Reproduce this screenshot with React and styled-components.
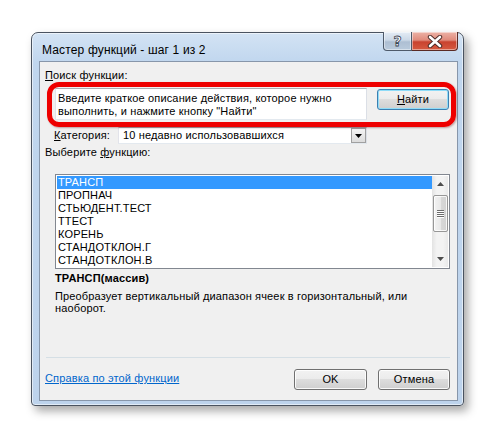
import React from "react";
import styled, { createGlobalStyle } from "styled-components";

const Global = createGlobalStyle`
  html, body { margin: 0; padding: 0; background: #ffffff; }
  body { font-family: "Liberation Sans", Arial, sans-serif; }
`;

const Page = styled.div`
  width: 497px;
  height: 439px;
  padding: 32px 0 0 31px;
  box-sizing: border-box;
  position: relative;
  overflow: hidden;
`;

const Window = styled.div`
  width: 433px;
  height: 374px;
  box-sizing: border-box;
  border: 1px solid #4a5360;
  border-radius: 7px 7px 4px 4px;
  background: linear-gradient(to bottom, #d3e3f4 0px, #c0d6ee 30px, #bdd3ec 100%);
  box-shadow: 4px 5px 10px rgba(0, 0, 0, 0.35), inset 0 0 0 1px rgba(255, 255, 255, 0.55);
  padding: 0 5px 4px 7px;
  display: flex;
  flex-direction: column;
`;

const TitleBar = styled.div`
  height: 28px;
  display: flex;
  justify-content: space-between;
  align-items: flex-start;
`;

const Title = styled.div`
  font-family: "Liberation Sans", Arial, sans-serif;
  font-size: 12px;
  line-height: 15px;
  color: #000;
  margin: 10px 0 0 3px;
  letter-spacing: 0.15px;
`;

const CaptionButtons = styled.div`
  display: flex;
  margin-top: -1px;
`;

const CapButton = styled.div`
  width: ${(p) => p.$w}px;
  height: 19px;
  box-sizing: border-box;
  border: 1px solid ${(p) => (p.$close ? "#5a2a24" : "#4e5a6a")};
  border-top: none;
  border-radius: ${(p) => (p.$close ? "0 0 4px 0" : "0 0 0 4px")};
  ${(p) => (p.$close ? "border-left: none;" : "")}
  background: ${(p) =>
    p.$close
      ? "linear-gradient(to bottom, #ecb2a6 0%, #e08b7c 45%, #c9432f 55%, #d65a40 100%)"
      : "linear-gradient(to bottom, #e4ecf5 0%, #cbd8e7 45%, #aebfd3 55%, #b9cadc 100%)"};
  box-shadow: inset 0 0 0 1px rgba(255, 255, 255, 0.45);
  display: flex;
  align-items: center;
  justify-content: center;
`;

const QMark = styled.span`
  font-family: "DejaVu Sans", sans-serif;
  font-weight: bold;
  font-size: 14px;
  line-height: 14px;
  color: #fff;
  -webkit-text-stroke: 0.8px #3a4452;
  margin-top: -1px;
`;

const Client = styled.div`
  flex: 1;
  background: #f0f0f0;
  border: 1px solid #8796aa;
  display: flex;
  flex-direction: column;
  padding: 0 7px 0 5px;
  font-family: "Liberation Sans", Arial, sans-serif;
  font-size: 11px;
  letter-spacing: 0.15px;
  color: #000;
`;

const Label = styled.div`
  line-height: 13px;
  margin: ${(p) => p.$m || "0"};
  white-space: nowrap;
`;

const U = styled.span`
  text-decoration: underline;
  text-underline-offset: 1px;
`;

const SearchRow = styled.div`
  display: flex;
  align-items: flex-start;
  margin: 6px 0 0 10px;
`;

const TextArea = styled.div`
  width: 312px;
  height: 32px;
  box-sizing: border-box;
  background: #fff;
  border: 1px solid #abadb3;
  border-color: #abadb3 #dbdfe6 #e3e9ef #e2e3ea;
  padding: 3px 2px 0 2px;
  line-height: 13px;
  white-space: nowrap;
  overflow: hidden;
`;

const Button = styled.div`
  width: ${(p) => p.$w}px;
  height: 21px;
  box-sizing: border-box;
  margin: ${(p) => p.$m || "0"};
  border: 1px solid ${(p) => (p.$focus ? "#3c7fb1" : "#707070")};
  border-radius: 3px;
  background: linear-gradient(to bottom, #f2f2f2 0%, #ebebeb 50%, #dddddd 50%, #cfcfcf 100%);
  box-shadow: inset 0 0 0 1px ${(p) => (p.$focus ? "#8fdcf8" : "rgba(255,255,255,0.85)")};
  display: flex;
  align-items: center;
  justify-content: center;
  font-size: 11px;
  line-height: 13px;
`;

const CategoryRow = styled.div`
  display: flex;
  align-items: center;
  margin: 7px 0 0 9px;
`;

const Select = styled.div`
  width: 249px;
  height: 17px;
  box-sizing: border-box;
  margin-left: 8px;
  background: #fff;
  border: 1px solid #abadb3;
  border-color: #abadb3 #dbdfe6 #e3e9ef #e2e3ea;
  display: flex;
  align-items: stretch;
`;

const SelectText = styled.div`
  flex: 1;
  padding-left: 4px;
  line-height: 15px;
  white-space: nowrap;
`;

const DropBtn = styled.div`
  width: 15px;
  box-sizing: border-box;
  border: 1px solid #a0a0a0;
  background: linear-gradient(to bottom, #f4f4f4, #dcdcdc);
  display: flex;
  align-items: center;
  justify-content: center;
`;

const ListBox = styled.div`
  width: 395px;
  height: 95px;
  box-sizing: border-box;
  margin: 15px 0 0 10px;
  border: 1px solid #828790;
  background: #fff;
  display: flex;
  padding: 1px;
`;

const Items = styled.div`
  flex: 1;
  display: flex;
  flex-direction: column;
`;

const Item = styled.div`
  height: 13px;
  line-height: 13px;
  padding-left: 1px;
  background: ${(p) => (p.$sel ? "#3399ff" : "transparent")};
  color: ${(p) => (p.$sel ? "#fff" : "#000")};
  white-space: nowrap;
`;

const ScrollBar = styled.div`
  width: 16px;
  background: linear-gradient(to right, #e3e3e3, #f3f3f3 30%, #f3f3f3 70%, #e9e9e9);
  display: flex;
  flex-direction: column;
  align-items: center;
`;

const ArrowCell = styled.div`
  height: 16px;
  width: 16px;
  display: flex;
  align-items: center;
  justify-content: center;
`;

const Thumb = styled.div`
  width: 15px;
  height: 37px;
  margin-top: 3px;
  box-sizing: border-box;
  border: 1px solid #979797;
  border-radius: 2px;
  background: linear-gradient(to right, #f3f3f3, #e8e8e8 50%, #d8d8d8 51%, #d2d2d2);
  box-shadow: inset 0 0 0 1px rgba(255, 255, 255, 0.8);
  display: flex;
  flex-direction: column;
  align-items: center;
  justify-content: center;
  gap: 1px;
`;

const Grip = styled.div`
  width: 7px;
  height: 1px;
  background: #6b6b6b;
  box-shadow: 0 1px 0 #fff;
`;

const Spacer = styled.div`
  flex: 1;
`;

const FuncName = styled.div`
  font-weight: bold;
  line-height: 13px;
  margin: 3px 0 0 10px;
`;

const Desc = styled.div`
  line-height: 12px;
  margin: 5px 0 0 10px;
`;

const Separator = styled.div`
  height: 1px;
  background: #d5dfe5;
  margin: 0 0 0 1px;
`;

const BottomRow = styled.div`
  display: flex;
  align-items: flex-start;
  margin: 11px 0 10px 0;
`;

const Link = styled.div`
  color: #0066cc;
  text-decoration: underline;
  line-height: 13px;
  margin-top: 3px;
  white-space: nowrap;
`;

const Highlight = styled.div`
  position: absolute;
  left: 47px;
  top: 82px;
  width: 409px;
  height: 45px;
  box-sizing: border-box;
  border: 5px solid #ee0000;
  border-radius: 12px;
  box-shadow: 1px 1px 2px rgba(90, 0, 0, 0.35);
  pointer-events: none;
`;

const items = [
  "ТРАНСП",
  "ПРОПНАЧ",
  "СТЬЮДЕНТ.ТЕСТ",
  "ТТЕСТ",
  "КОРЕНЬ",
  "СТАНДОТКЛОН.Г",
  "СТАНДОТКЛОН.В",
];

export default function App() {
  return (
    <Page>
      <Global />
      <Window>
        <TitleBar>
          <Title>Мастер функций - шаг 1 из 2</Title>
          <CaptionButtons>
            <CapButton $w={29}>
              <QMark>?</QMark>
            </CapButton>
            <CapButton $w={46} $close>
              <svg width="16" height="13" viewBox="0 0 16 13">
                <path
                  d="M3 2 L13 11 M13 2 L3 11"
                  stroke="#4a2a26"
                  strokeWidth="4.4"
                  strokeLinecap="round"
                />
                <path
                  d="M3 2 L13 11 M13 2 L3 11"
                  stroke="#ffffff"
                  strokeWidth="2.6"
                  strokeLinecap="round"
                />
              </svg>
            </CapButton>
          </CaptionButtons>
        </TitleBar>
        <Client>
          <Label $m="7px 0 0 0">
            <U>П</U>оиск функции:
          </Label>
          <SearchRow>
            <TextArea>
              Введите краткое описание действия, которое нужно
              <br />
              выполнить, и нажмите кнопку "Найти"
            </TextArea>
            <Button $w={72} $m="1px 0 0 10px" $focus>
              <span>
                <U>Н</U>айти
              </span>
            </Button>
          </SearchRow>
          <CategoryRow>
            <Label>
              <U>К</U>атегория:
            </Label>
            <Select>
              <SelectText>10 недавно использовавшихся</SelectText>
              <DropBtn>
                <svg width="7" height="4" viewBox="0 0 7 4">
                  <path d="M0 0 H7 L3.5 4 Z" fill="#000" />
                </svg>
              </DropBtn>
            </Select>
          </CategoryRow>
          <Label $m="2px 0 0 0">
            Выберите <U>ф</U>ункцию:
          </Label>
          <ListBox>
            <Items>
              {items.map((t, i) => (
                <Item key={t} $sel={i === 0}>
                  {t}
                </Item>
              ))}
            </Items>
            <ScrollBar>
              <ArrowCell>
                <svg width="7" height="4" viewBox="0 0 7 4">
                  <path d="M3.5 0 L7 4 H0 Z" fill="#4d4d4d" />
                </svg>
              </ArrowCell>
              <Thumb>
                <Grip />
                <Grip />
                <Grip />
                <Grip />
              </Thumb>
              <Spacer />
              <ArrowCell>
                <svg width="7" height="4" viewBox="0 0 7 4">
                  <path d="M0 0 H7 L3.5 4 Z" fill="#4d4d4d" />
                </svg>
              </ArrowCell>
            </ScrollBar>
          </ListBox>
          <FuncName>ТРАНСП(массив)</FuncName>
          <Desc>
            Преобразует вертикальный диапазон ячеек в горизонтальный, или
            <br />
            наоборот.
          </Desc>
          <Spacer />
          <Separator />
          <BottomRow>
            <Link>Справка по этой функции</Link>
            <Spacer />
            <Button $w={73}>OK</Button>
            <Button $w={72} $m="0 0 0 11px">
              Отмена
            </Button>
          </BottomRow>
        </Client>
      </Window>
      <Highlight />
    </Page>
  );
}
